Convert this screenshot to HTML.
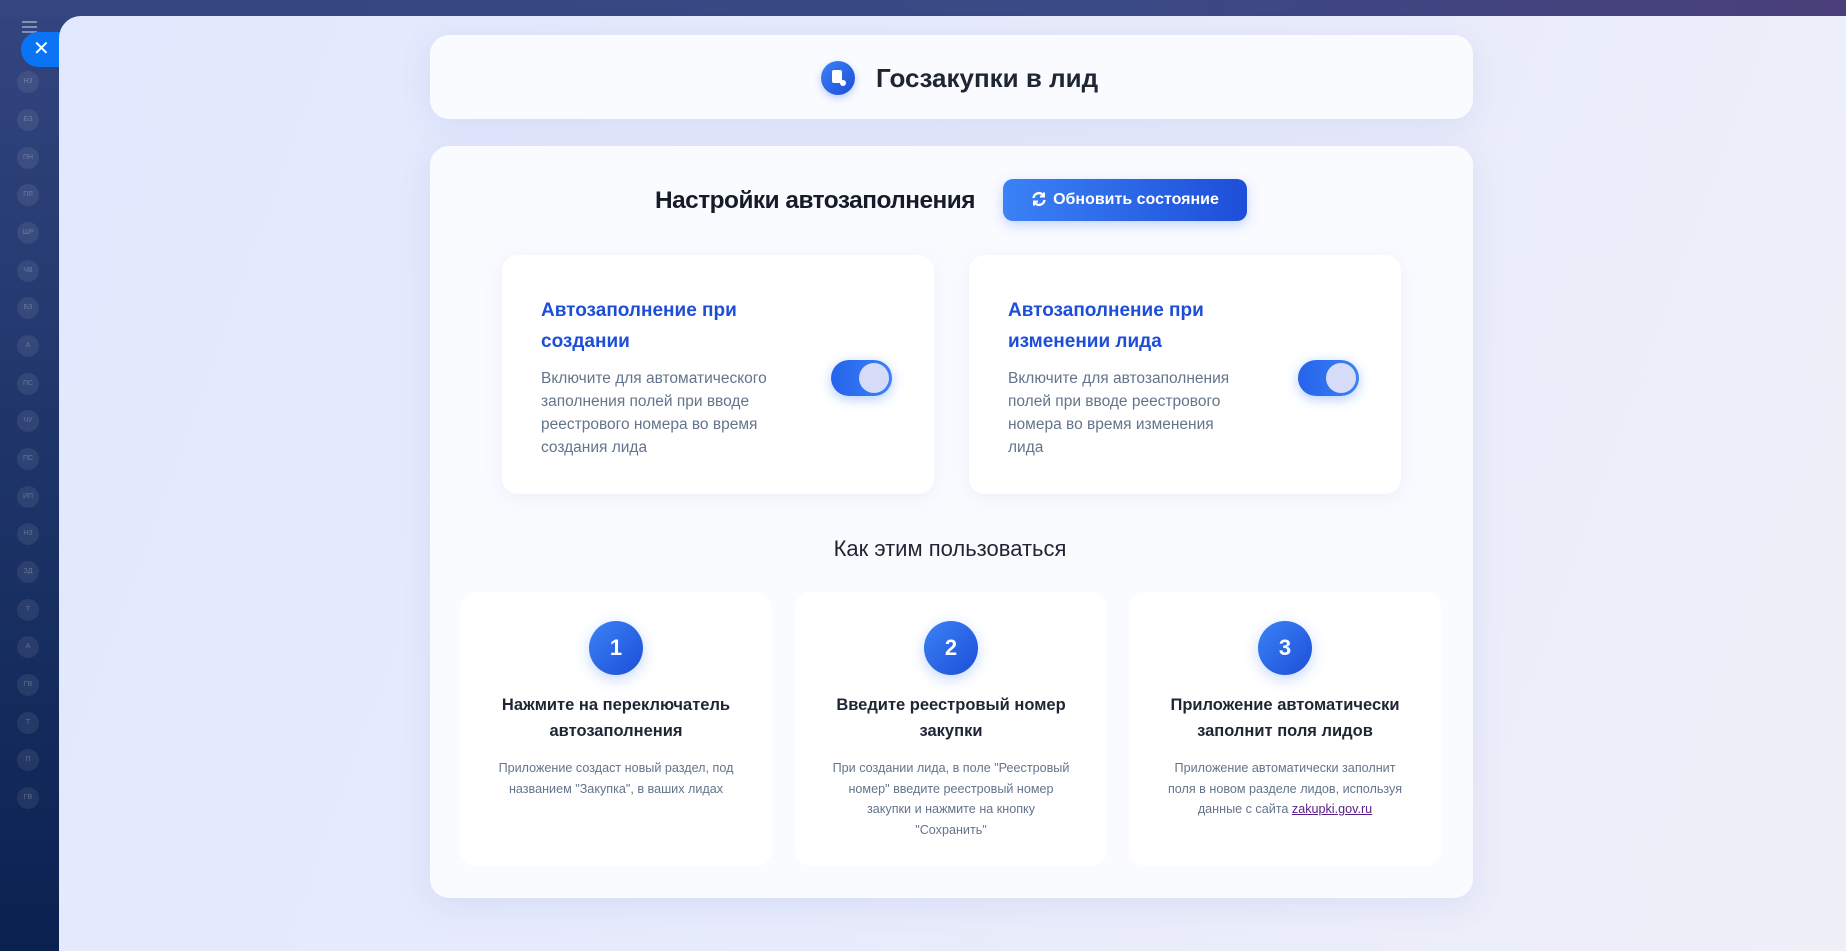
<!DOCTYPE html>
<html><head><meta charset="utf-8"><style>
*{box-sizing:border-box;margin:0;padding:0}
body{width:1846px;height:951px;overflow:hidden;font-family:"Liberation Sans","DejaVu Sans",sans-serif;background:linear-gradient(180deg,#33457f 0%,#1d3468 50%,#0b2150 100%);position:relative}
.top{position:absolute;left:0;top:0;width:1846px;height:18px;background:linear-gradient(90deg,#33467f,#3a4a86 60%,#4a3f7a)}
.av{position:absolute;left:17px;width:22px;height:22px;border-radius:50%;background:rgba(255,255,255,.08);color:rgba(255,255,255,.25);font-size:7px;text-align:center;line-height:22px}
.close{position:absolute;left:21px;top:32px;width:60px;height:35px;border-radius:18px;background:#0a74f5;color:#fff;font-size:20px;line-height:35px;padding-left:12px;z-index:1}
.panel{position:absolute;left:59px;top:16px;right:0;bottom:0;border-radius:22px 0 0 0;background:linear-gradient(110deg,#e2e8fd 0%,#e7ebfb 50%,#efeff8 100%);z-index:2}
.card{position:absolute;left:430px;width:1043px;background:#fafbff;border-radius:19px;box-shadow:0 6px 30px rgba(120,140,220,.15)}
.hdr{top:35px;height:84px}
.main{top:146px;height:752px}
.ico{position:absolute;left:821px;top:61px;width:34px;height:34px;border-radius:50%;background:linear-gradient(135deg,#3b82f6,#1d4ed8);box-shadow:0 3px 8px rgba(37,99,235,.3)}
h1{position:absolute;left:876px;top:61px;font-size:26px;font-weight:bold;color:#1e2533;line-height:34px}
h2{position:absolute;left:560px;top:183px;width:415px;text-align:right;white-space:nowrap;font-size:24.4px;font-weight:bold;color:#151b28;line-height:36px;letter-spacing:-.5px}
.btn{position:absolute;left:1003px;top:179px;width:244px;height:42px;border-radius:10px;background:linear-gradient(90deg,#3b82f6,#1d4ed8);color:#fff;font-weight:bold;font-size:16px;line-height:42px;text-align:center;box-shadow:0 4px 12px rgba(37,99,235,.25)}
.btn svg{vertical-align:-3px;margin-right:6px}
.tc{position:absolute;top:255px;width:432px;height:239px;background:#fff;border-radius:16px;box-shadow:0 4px 20px rgba(120,140,220,.1)}
.tc h3{position:absolute;left:39px;top:40px;width:240px;font-size:19px;color:#1d4ed8;line-height:31px}
.tc p{position:absolute;left:39px;top:112px;width:250px;font-size:15.5px;color:#64748b;line-height:23px}
.tg{position:absolute;left:329px;top:105px;width:61px;height:36px;border-radius:18px;background:linear-gradient(90deg,#2563eb,#3b82f6);box-shadow:0 3px 12px rgba(59,130,246,.4)}
.tg:after{content:"";position:absolute;right:3px;top:3px;width:30px;height:30px;border-radius:50%;background:#d6dcf8}
.how{position:absolute;left:700px;top:533px;width:500px;text-align:center;font-size:22px;color:#1e2533;line-height:32px}
.sc{position:absolute;top:592px;width:312px;height:274px;background:#fff;border-radius:16px;text-align:center}
.num{position:absolute;left:129px;top:29px;width:54px;height:54px;border-radius:50%;background:linear-gradient(135deg,#3b82f6,#1d4ed8);color:#fff;font-weight:bold;font-size:22px;line-height:54px;box-shadow:0 4px 14px rgba(59,130,246,.3)}
.sc h4{position:absolute;left:16px;right:16px;top:100px;font-size:16.5px;color:#1e2533;line-height:26px}
.sc p{position:absolute;left:30px;right:30px;top:166px;font-size:12.6px;color:#64748b;line-height:20.5px}
a{color:#581c87;text-decoration:underline}
</style></head><body>
<div class="top"></div>
<div style="position:absolute;left:22px;top:21px;width:15px;height:2px;background:rgba(255,255,255,.4);box-shadow:0 5px 0 rgba(255,255,255,.4),0 10px 0 rgba(255,255,255,.4)"></div>
<div class="av" style="top:71px">НЗ</div><div class="av" style="top:109px">БЗ</div><div class="av" style="top:147px">ПН</div><div class="av" style="top:184px">ПЛ</div><div class="av" style="top:222px">ШР</div><div class="av" style="top:260px">ЧВ</div><div class="av" style="top:297px">БЗ</div><div class="av" style="top:335px">А</div><div class="av" style="top:373px">ПС</div><div class="av" style="top:410px">ЧУ</div><div class="av" style="top:448px">ПС</div><div class="av" style="top:486px">ИП</div><div class="av" style="top:523px">НЗ</div><div class="av" style="top:561px">ЗД</div><div class="av" style="top:599px">Т</div><div class="av" style="top:636px">А</div><div class="av" style="top:674px">ГВ</div><div class="av" style="top:712px">Т</div><div class="av" style="top:749px">П</div><div class="av" style="top:787px">ГВ</div>
<div class="close">✕</div>
<div class="panel"></div>
<div style="position:absolute;inset:0;z-index:3">
<div class="card hdr"></div>
<div class="ico"><div style="position:absolute;left:11px;top:9px;width:10px;height:13px;background:#fff;border-radius:2px"></div><div style="position:absolute;left:19px;top:19px;width:6px;height:6px;background:#fff;border-radius:50%"></div></div>
<h1>Госзакупки в лид</h1>
<div class="card main"></div>
<h2>Настройки автозаполнения</h2>
<div class="btn"><svg width="16" height="16" viewBox="0 0 16 16" fill="none" stroke="#fff" stroke-width="2.4"><path d="M2.5 7A5.5 5.5 0 0 1 12.5 4.5"/><path d="M13.5 9A5.5 5.5 0 0 1 3.5 11.5"/><path d="M13 1.5v4h-4" stroke-width="2"/><path d="M3 14.5v-4h4" stroke-width="2"/></svg>Обновить состояние</div>
<div class="tc" style="left:502px"><h3>Автозаполнение при создании</h3><p>Включите для автоматического заполнения полей при вводе реестрового номера во время создания лида</p><div class="tg"></div></div>
<div class="tc" style="left:969px"><h3>Автозаполнение при изменении лида</h3><p style="width:240px">Включите для автозаполнения полей при вводе реестрового номера во время изменения лида</p><div class="tg"></div></div>
<div class="how">Как этим пользоваться</div>
<div class="sc" style="left:460px"><div class="num">1</div><h4>Нажмите на переключатель автозаполнения</h4><p>Приложение создаст новый раздел, под названием "Закупка", в ваших лидах</p></div>
<div class="sc" style="left:795px"><div class="num">2</div><h4>Введите реестровый номер закупки</h4><p style="left:10px;right:10px">При создании лида, в поле "Реестровый<br>номер" введите реестровый номер<br>закупки и нажмите на кнопку<br>"Сохранить"</p></div>
<div class="sc" style="left:1129px"><div class="num">3</div><h4>Приложение автоматически заполнит поля лидов</h4><p>Приложение автоматически заполнит поля в новом разделе лидов, используя данные с сайта <a>zakupki.gov.ru</a></p></div>
</div>
</body></html>
